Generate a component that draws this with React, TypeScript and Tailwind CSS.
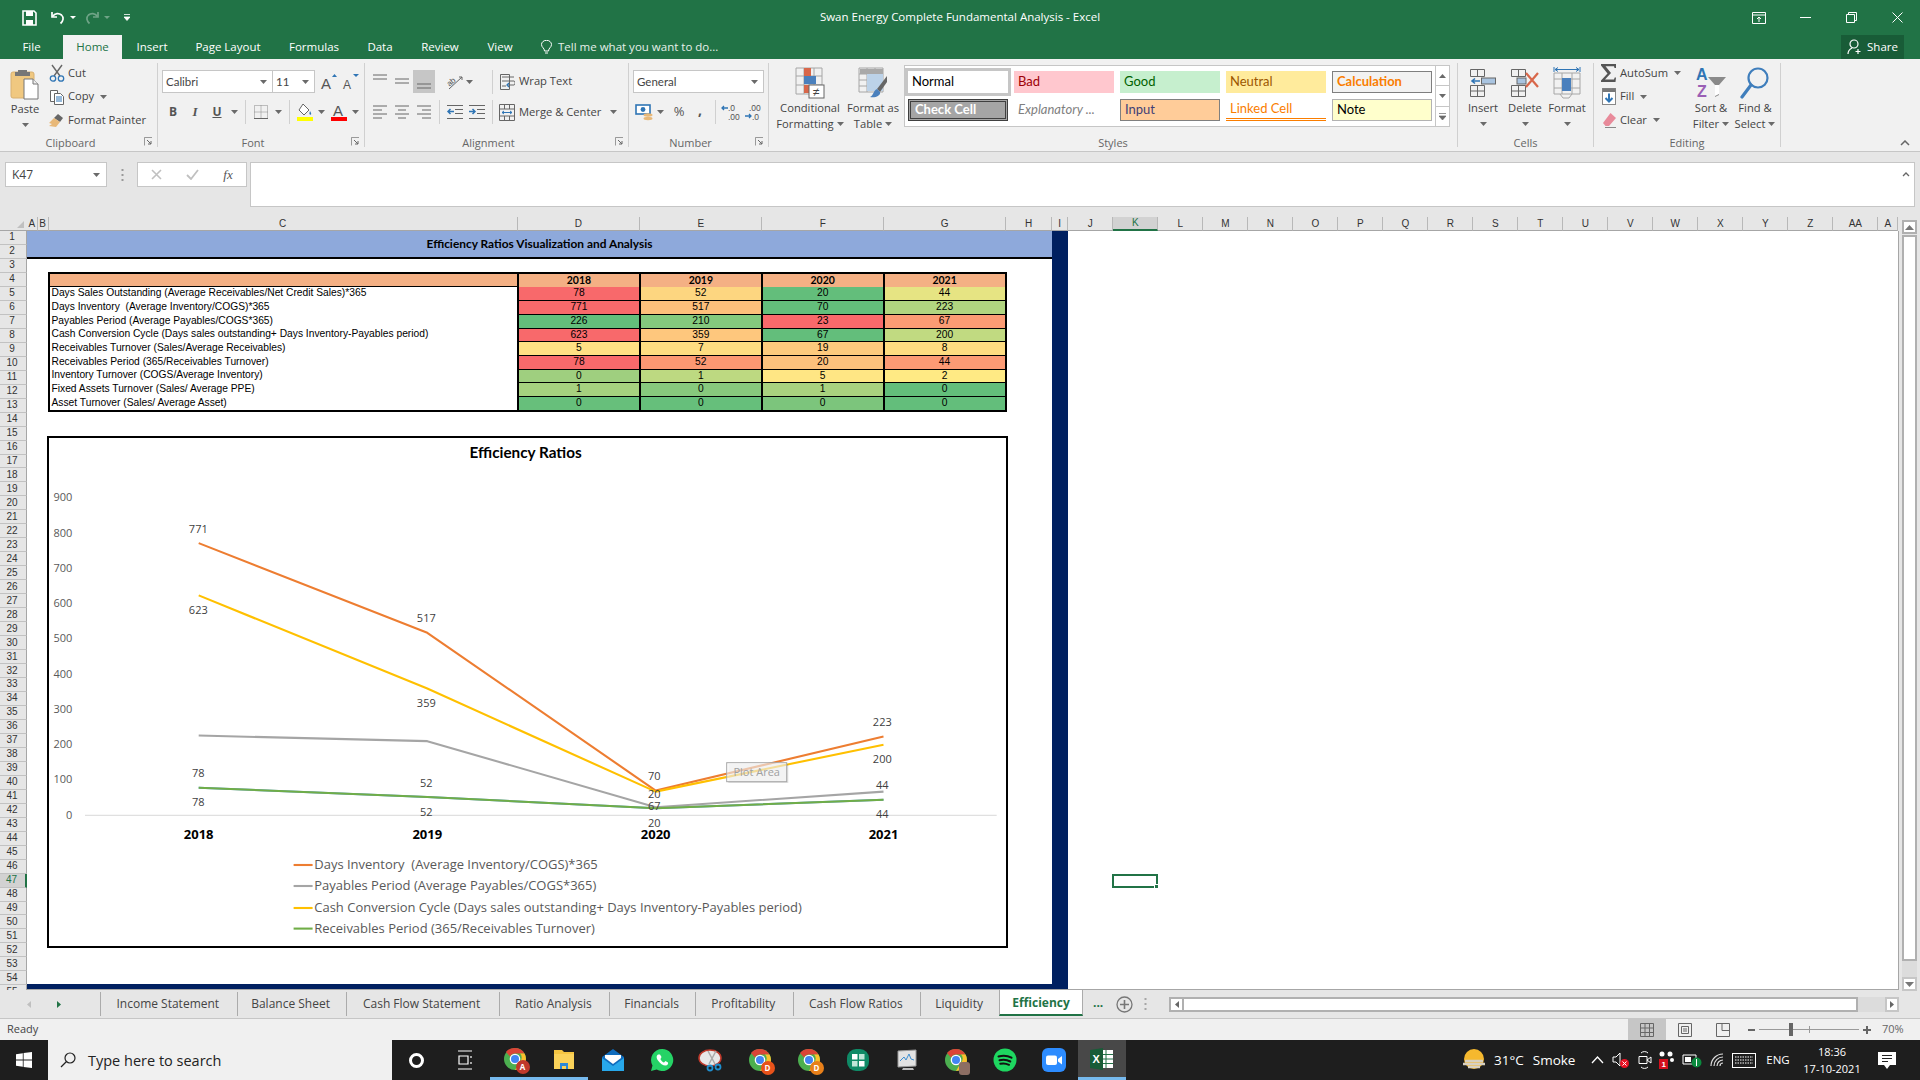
import React from "react";

const uiFont = "font-['Open_Sans',sans-serif]";
const calibri = "font-['Lato','Noto_Sans',sans-serif]";

// ---------- small helpers ----------
const Caret = ({ className = "" }: { className?: string }) => (
  <svg width="7" height="4" viewBox="0 0 7 4" className={className}>
    <path d="M0 0h7L3.5 4z" fill="#6a6a6a" />
  </svg>
);

const Slot = ({ w, children, className = "" }: { w: string; children?: React.ReactNode; className?: string }) => (
  <div className={`flex h-full shrink-0 items-center justify-center ${w} ${className}`}>{children}</div>
);

const Launcher = () => (
  <svg width="9" height="9" viewBox="0 0 9 9" className="absolute bottom-[1px] right-[4px]">
    <path d="M.5 4V.5H8M.5.5v8" fill="none" stroke="#9a9a9a" />
    <path d="M3 3l4 4M7 4v3H4" fill="none" stroke="#666" />
  </svg>
);

const Group = ({ w, label, launcher, children }: { w: string; label: string; launcher?: boolean; children: React.ReactNode }) => (
  <div className={`relative mt-1 flex h-[84px] shrink-0 flex-col border-r border-[#d0d0d0] ${w}`}>
    <div className="h-[72px]">{children}</div>
    <div className={`h-[12px] text-center text-[11px] leading-[16px] text-[#666] ${launcher ? "pr-[16px]" : ""}`}>{label}</div>
    {launcher && <Launcher />}
  </div>
);

const BigButton = ({ w, icon, lines, caretInline }: { w: string; icon: React.ReactNode; lines: string[]; caretInline?: boolean }) => (
  <div className={`flex shrink-0 flex-col items-center pt-[3px] ${w}`}>
    <div className="flex h-[34px] items-center justify-center">{icon}</div>
    {lines.map((l, i) => (
      <div key={l} className="flex h-[16px] items-center gap-[3px] whitespace-nowrap text-[11.2px] leading-[16px] text-[#444]">
        {l}
        {caretInline && i === lines.length - 1 && <Caret />}
      </div>
    ))}
    {!caretInline && (
      <div className="flex h-[16px] items-center">
        <Caret />
      </div>
    )}
  </div>
);

const Sep = ({ ml }: { ml: string }) => <div className={`h-[24px] w-px shrink-0 bg-[#d0d0d0] ${ml}`} />;

const Lines = ({ kind }: { kind: string }) => {
  const rows: Record<string, string> = {
    top: "M2 2h14M2 6h14",
    mid: "M2 6h14M2 10h14",
    bot: "M2 11h14M2 15h14",
    left: "M2 3h14M2 7h9M2 11h14M2 15h9",
    center: "M2 3h14M5 7h8M2 11h14M5 15h8",
    right: "M2 3h14M7 7h9M2 11h14M7 15h9",
  };
  return (
    <svg width="18" height="18" viewBox="0 0 18 18">
      <path d={rows[kind]} stroke="#666" fill="none" />
    </svg>
  );
};

// ---------- ribbon icons ----------
const PasteIcon = () => (
  <svg width="30" height="32" viewBox="0 0 30 32">
    <rect x="1" y="4" width="23" height="26" rx="2" fill="#f0c880" stroke="#d8b070" />
    <path d="M8 2h9v2h3v4H5V4h3z" fill="#777" />
    <path d="M14 11h9l5 5v15H14z" fill="#fff" stroke="#777" />
    <path d="M23 11v5h5" fill="#eee" stroke="#777" />
  </svg>
);
const CutIcon = () => (
  <svg width="16" height="18" viewBox="0 0 16 18" fill="none">
    <path d="M3 1l8 11M13 1L5 12" stroke="#666" strokeWidth="1.4" />
    <circle cx="4" cy="14.5" r="2.7" stroke="#2f75b5" strokeWidth="1.3" />
    <circle cx="12" cy="14.5" r="2.7" stroke="#2f75b5" strokeWidth="1.3" />
  </svg>
);
const CopyIcon = () => (
  <svg width="16" height="16" viewBox="0 0 16 16" fill="#fff">
    <path d="M1.5 1.5h7v11h-7z" stroke="#666" />
    <path d="M5.5 4.5h6l3 3v8h-9z" stroke="#666" />
    <path d="M7 8h6M7 10h6M7 12h6" stroke="#2f75b5" />
  </svg>
);
const PainterIcon = () => (
  <svg width="18" height="17" viewBox="0 0 18 17">
    <path d="M10 2l5 4-3 4-6-4z" fill="#666" />
    <path d="M6 6l6 4-4 5-7-1 3-2-3-1z" fill="#e8b878" />
  </svg>
);
const FontGrow = ({ up }: { up: boolean }) => (
  <svg width="18" height="18" viewBox="0 0 18 18">
    <text x="1" y="16" fontSize={up ? 15 : 12} fontFamily="Liberation Sans" fill="#555">A</text>
    <path d={up ? "M12 4l2.5-3L17 4z" : "M11 1h6l-3 3z"} fill="#2f75b5" />
  </svg>
);
const BordersIcon = () => (
  <svg width="16" height="16" viewBox="0 0 16 16" fill="none">
    <path d="M1.5 1.5h13v13h-13zM8 1.5v13M1.5 8h13" stroke="#888" strokeDasharray="1 1" />
    <path d="M1 14.5h14" stroke="#666" />
  </svg>
);
const FillIcon = () => (
  <svg width="18" height="20" viewBox="0 0 18 20" fill="none">
    <path d="M7 2l6 6-5 5-5-5z" fill="#fff" stroke="#666" />
    <path d="M14 9c1.4 2 1.6 3.6.4 3.8-1.3 0-1.2-1.8-.4-3.8z" fill="#2f75b5" />
    <rect x="1" y="15" width="16" height="4" fill="#ffff00" />
  </svg>
);
const FontColorIcon = () => (
  <svg width="18" height="20" viewBox="0 0 18 20">
    <text x="3" y="13.5" fontSize="15" fontFamily="Liberation Sans" fill="#555">A</text>
    <rect x="1" y="15" width="16" height="4" fill="#ff0000" />
  </svg>
);
const OrientIcon = () => (
  <svg width="18" height="18" viewBox="0 0 18 18" fill="none">
    <text x="1" y="11" fontSize="8" fontFamily="Liberation Sans" fill="#555" transform="rotate(-40 6 9)">ab</text>
    <path d="M3 16L16 4M13 4h3v3" stroke="#666" />
  </svg>
);
const WrapIcon = () => (
  <svg width="16" height="18" viewBox="0 0 16 18" fill="none">
    <path d="M1.5 1.5h9v15h-9M1.5 1.5v15" stroke="#666" />
    <path d="M3 4h12M3 8h12c1.5 0 1.5 4 0 4H9M3 13h4" stroke="#666" />
    <path d="M10 10l-2 2 2 2" stroke="#2f75b5" strokeWidth="1.3" />
  </svg>
);
const MergeIcon = () => (
  <svg width="16" height="17" viewBox="0 0 16 17" fill="none">
    <path d="M.5.5h15v16H.5zM.5 5h15M.5 12h15M5.5.5V5M10.5.5V5M5.5 12v4.5M10.5 12v4.5" stroke="#666" />
    <path d="M3 8.5h10M5 7l-2 1.5L5 10M11 7l2 1.5-2 1.5" stroke="#2f75b5" />
  </svg>
);
const IndentIcon = ({ dir }: { dir: "in" | "out" }) => (
  <svg width="18" height="16" viewBox="0 0 18 16" fill="none">
    <path d="M1 1.5h16M9 5.5h8M9 9.5h8M1 14.5h16" stroke="#666" />
    {dir === "out" ? (
      <path d="M8 7.5H2M4.5 5L2 7.5 4.5 10" stroke="#2f75b5" strokeWidth="1.5" />
    ) : (
      <path d="M1 7.5h6M4.5 5L7 7.5 4.5 10" stroke="#2f75b5" strokeWidth="1.5" />
    )}
  </svg>
);
const AccountingIcon = () => (
  <svg width="19" height="17" viewBox="0 0 19 17">
    <rect x="1" y="1" width="14" height="9" fill="#fff" stroke="#2f75b5" strokeWidth="1.6" />
    <circle cx="8" cy="5.5" r="2.4" fill="#2f75b5" />
    <ellipse cx="13" cy="11" rx="4.5" ry="1.7" fill="#e8b878" />
    <ellipse cx="13" cy="14.5" rx="4.5" ry="1.7" fill="#e8b878" />
  </svg>
);
const DecimalIcon = ({ inc }: { inc: boolean }) => (
  <svg width="20" height="18" viewBox="0 0 20 18">
    <text x={inc ? 7 : 5} y="8" fontSize="8.5" fontFamily="Liberation Sans" fill="#555">{inc ? ".0" : ".00"}</text>
    <text x={inc ? 7 : 8} y="17" fontSize="8.5" fontFamily="Liberation Sans" fill="#555">{inc ? ".00" : ".0"}</text>
    <path d={inc ? "M1 5h6M3 3L1 5l2 2" : "M1 13h6M5 11l2 2-2 2"} fill="none" stroke="#2f75b5" strokeWidth="1.3" />
  </svg>
);
const CondFmtIcon = () => (
  <svg width="30" height="32" viewBox="0 0 30 32" fill="none">
    <path d="M1 1h26v26H1zM9 1v26M19 1v26M1 9h26M1 18h26" stroke="#a6a6a6" />
    <rect x="9" y="1" width="7" height="8" fill="#d8674a" />
    <rect x="9" y="9" width="12" height="8" fill="#4a80bd" />
    <rect x="9" y="18" width="9" height="8" fill="#d8674a" />
    <rect x="14" y="18" width="15" height="13" fill="#fff" stroke="#666" />
    <text x="18" y="29" fontSize="12" fontFamily="Liberation Sans" fill="#444">≠</text>
  </svg>
);
const FmtTableIcon = () => (
  <svg width="30" height="32" viewBox="0 0 30 32" fill="none">
    <path d="M1 1h24v24H1zM1 7h24M1 13h24M1 19h24M9 1v24M17 1v24" stroke="#a6a6a6" />
    <rect x="2" y="2" width="23" height="5" fill="#a9a9a9" />
    <rect x="9" y="7" width="16" height="17" fill="#bcd2e8" />
    <path d="M29 9L19 22l3 3 7-10z" fill="#666" />
    <path d="M19 22c-4 2-3 6-7 8 5 1 11-1 10-5z" fill="#4a80bd" />
  </svg>
);
const InsertIcon = () => (
  <svg width="28" height="32" viewBox="0 0 28 32" fill="none">
    <path d="M1.5 2.5h14v7h-14zM8.5 2.5v7M1.5 18.5h14v11h-14zM8.5 18.5v11M1.5 24h14" stroke="#666" />
    <rect x="12.5" y="11" width="14" height="6" fill="#a9c4e0" stroke="#666" />
    <path d="M11 14H3M6 11.5L3 14l3 2.5" stroke="#2f75b5" strokeWidth="1.6" />
  </svg>
);
const DeleteIcon = () => (
  <svg width="30" height="32" viewBox="0 0 30 32" fill="none">
    <path d="M1.5 2.5h14v7h-14zM8.5 2.5v7M1.5 18.5h14v11h-14zM8.5 18.5v11M1.5 24h14" stroke="#666" />
    <rect x="7" y="11" width="9" height="6" fill="#a9c4e0" stroke="#666" />
    <path d="M16 6l12 14M28 6L16 20" stroke="#d8674a" strokeWidth="2.2" />
  </svg>
);
const FormatCellsIcon = () => (
  <svg width="30" height="34" viewBox="0 0 30 34" fill="none">
    <path d="M2 1v5M28 1v5M3 3.5h24M3 3.5l3-2M3 3.5l3 2M27 3.5l-3-2M27 3.5l-3 2" stroke="#2f75b5" />
    <path d="M2 7h26v21H2zM10 7v21M20 7v21M2 13h26M2 22h26" stroke="#a6a6a6" />
    <rect x="10" y="12" width="9" height="13" fill="#4a80bd" />
    <path d="M8 28l3 4h6l3-4" stroke="#a6a6a6" />
  </svg>
);
const SigmaIcon = () => (
  <svg width="16" height="18" viewBox="0 0 16 18">
    <path d="M0 0h15v4h-1.5l-.5-1.7H4.5L10 9l-6 6.5h9l.7-2H15L14.5 18H0v-1.4L6.5 9.5 0 1.4z" fill="#555" />
  </svg>
);
const FillDownIcon = () => (
  <svg width="14" height="17" viewBox="0 0 14 17" fill="none">
    <rect x=".5" y=".5" width="13" height="16" fill="#fff" stroke="#888" />
    <rect x=".5" y=".5" width="13" height="3.5" fill="#777" />
    <path d="M7 5.5v8M3.5 10L7 13.5 10.5 10" stroke="#2f75b5" strokeWidth="2" />
  </svg>
);
const EraserIcon = () => (
  <svg width="15" height="16" viewBox="0 0 15 16">
    <path d="M8.5 1L14 6l-7 8H3.5L1 11z" fill="#e88a9a" />
    <path d="M3 15.5h11" stroke="#888" />
  </svg>
);
const SortIcon = () => (
  <svg width="32" height="34" viewBox="0 0 32 34">
    <text x="1" y="14" fontSize="16" fontWeight="700" fontFamily="Liberation Sans" fill="#2f75b5">A</text>
    <text x="2" y="31" fontSize="16" fontWeight="700" fontFamily="Liberation Sans" fill="#9a5fb5">Z</text>
    <path d="M13 11h18l-7 8v10l-4 2V19z" fill="#8a8a8a" />
    <path d="M20 19h4v9l-4 2z" fill="#fff" />
  </svg>
);
const FindIcon = () => (
  <svg width="30" height="34" viewBox="0 0 30 34" fill="none">
    <circle cx="18" cy="12" r="9.5" stroke="#3f7ebc" strokeWidth="2.2" />
    <path d="M11 19L2 31" stroke="#3f7ebc" strokeWidth="3.2" strokeLinecap="round" />
  </svg>
);

// ---------- title bar ----------
const TitleBar = () => (
  <div className="relative flex h-[35px] items-center text-white">
    <Slot w="w-[28px]" className="ml-[15px]">
      <svg width="15" height="16" viewBox="0 0 15 16" fill="none">
        <path d="M1 1h11l2 2v12H1z" stroke="#fff" strokeWidth="1.6" />
        <rect x="4" y="1" width="7" height="5" fill="#fff" />
        <rect x="4" y="10" width="7" height="5" fill="#fff" />
      </svg>
    </Slot>
    <Slot w="w-[24px]" className="ml-[3px]">
      <svg width="16" height="16" viewBox="0 0 16 16" fill="none">
        <path d="M2 2v5h5" stroke="#fff" strokeWidth="1.7" />
        <path d="M2.5 6.5C5 3 9 3 11.5 5c2.5 2.4 2 6-1 8.5" stroke="#fff" strokeWidth="1.7" />
      </svg>
    </Slot>
    <svg width="6" height="3" viewBox="0 0 6 3"><path d="M0 0h6L3 3z" fill="#fff" /></svg>
    <Slot w="w-[24px]" className="ml-[4px]">
      <svg width="16" height="16" viewBox="0 0 16 16" fill="none" opacity=".35">
        <path d="M14 2v5H9" stroke="#fff" strokeWidth="1.7" />
        <path d="M13.5 6.5C11 3 7 3 4.5 5c-2.5 2.4-2 6 1 8.5" stroke="#fff" strokeWidth="1.7" />
      </svg>
    </Slot>
    <svg width="6" height="3" viewBox="0 0 6 3" opacity=".35"><path d="M0 0h6L3 3z" fill="#fff" /></svg>
    <svg width="6" height="7" viewBox="0 0 6 7" className="ml-[14px]">
      <path d="M0 .5h6M0 3h6L3 6.5z" stroke="#fff" strokeWidth=".8" fill="#fff" />
    </svg>
    <div className="absolute left-0 right-0 top-[9px] text-center text-[11.5px] leading-[16px] text-[#fff]">
      Swan Energy Complete Fundamental Analysis - Excel
    </div>
    <div className="ml-auto flex h-full">
      <Slot w="w-[46px]">
        <svg width="14" height="12" viewBox="0 0 14 12" fill="none" stroke="#fff">
          <path d="M.5.5h13v11H.5zM.5 3h13M7 10V5M5 7l2-2 2 2" />
        </svg>
      </Slot>
      <Slot w="w-[46px]">
        <svg width="11" height="1" viewBox="0 0 11 1"><path d="M0 .5h11" stroke="#fff" /></svg>
      </Slot>
      <Slot w="w-[46px]">
        <svg width="11" height="11" viewBox="0 0 11 11" fill="none" stroke="#fff">
          <path d="M.5 2.5h8v8h-8zM2.5 2.5v-2h8v8h-2" />
        </svg>
      </Slot>
      <Slot w="w-[46px]">
        <svg width="11" height="11" viewBox="0 0 11 11" fill="none" stroke="#fff">
          <path d="M.5.5l10 10M10.500.5l-10 10" />
        </svg>
      </Slot>
    </div>
  </div>
);

const MenuTabs = () => {
  const tabs: [string, string][] = [
    ["Insert", "w-[60px]"],
    ["Page Layout", "w-[92px]"],
    ["Formulas", "w-[80px]"],
    ["Data", "w-[52px]"],
    ["Review", "w-[68px]"],
    ["View", "w-[52px]"],
  ];
  return (
    <div className="flex h-[24px] text-[11.5px] text-white">
      <Slot w="w-[63px]" className="pb-[1px] pt-[1px]">
        File
      </Slot>
      <Slot w="w-[59px]" className="bg-[#f1f1f1] text-[#217346]">
        Home
      </Slot>
      {tabs.map(([t, w]) => (
        <Slot key={t} w={w}>
          {t}
        </Slot>
      ))}
      <div className="ml-[15px] flex items-center gap-[6px] text-[#e6f0ea]">
        <svg width="11" height="15" viewBox="0 0 11 15" fill="none" stroke="#fff">
          <path d="M3.500 11c0-3-3-3.500-3-6.500a5 4.200 0 0 1 10 0c0 3-3 3.500-3 6.500zM4 13h3" />
        </svg>
        Tell me what you want to do...
      </div>
      <div className="ml-auto mr-[16px] flex w-[63px] items-center justify-center gap-[4px] bg-[#185c37]">
        <svg width="16" height="16" viewBox="0 0 16 16" fill="none" stroke="#fff" strokeWidth="1.2">
          <circle cx="7" cy="5" r="4" />
          <path d="M1 15c0-3.500 2-5 4-6M11 10v5M8.500 12.500h5" />
        </svg>
        Share
      </div>
    </div>
  );
};

// ---------- ribbon ----------
const SmallAction = ({ icon, label, caret }: { icon: React.ReactNode; label: string; caret?: boolean }) => (
  <div className="flex h-[20px] items-center whitespace-nowrap text-[11.2px] text-[#444]">
    <div className="flex w-[18px] justify-center">{icon}</div>
    <span className="ml-[2px]">{label}</span>
    {caret && <Caret className="ml-[6px]" />}
  </div>
);

const Box = ({ w, text, className = "" }: { w: string; text: string; className?: string }) => (
  <div className={`flex h-[23px] shrink-0 items-center justify-between border border-[#c6c6c6] bg-white pl-[3px] pr-[5px] text-[11.5px] text-[#444] ${w} ${className}`}>
    {text}
    <Caret />
  </div>
);

const StyleCell = ({ text, className }: { text: string; className: string }) => (
  <div className={`flex h-[22px] w-[100px] items-center overflow-hidden whitespace-nowrap px-[4px] text-[13px] ${calibri} ${className}`}>{text}</div>
);

const Ribbon = () => (
  <div className={`relative flex h-[93px] border-b border-[#c6c6c6] bg-[#f1f1f1] ${uiFont}`}>
    <Group w="w-[158px]" label="Clipboard" launcher>
      <div className="flex">
        <div className="flex w-[50px] flex-col items-center pt-[4px]">
          <div className="flex h-[33px] items-center"><PasteIcon /></div>
          <div className="mt-[1px] h-[16px] text-[11.2px] leading-[16px] text-[#444]">Paste</div>
          <div className="flex h-[16px] items-center"><Caret /></div>
        </div>
        <div className="ml-[-2px] flex flex-col gap-[3.5px]">
          <SmallAction icon={<CutIcon />} label="Cut" />
          <SmallAction icon={<CopyIcon />} label="Copy" caret />
          <SmallAction icon={<PainterIcon />} label="Format Painter" />
        </div>
      </div>
    </Group>

    <Group w="w-[207px]" label="Font" launcher>
      <div className="flex flex-col gap-[7px] pl-[4px] pt-[7px]">
        <div className="flex items-center">
          <Box w="w-[111px]" text="Calibri" className={calibri} />
          <Box w="w-[43px]" text="11" className={`ml-[-1px] ${calibri}`} />
          <Slot w="w-[22px]" className="ml-[3px]"><FontGrow up /></Slot>
          <Slot w="w-[22px]"><FontGrow up={false} /></Slot>
        </div>
        <div className="flex h-[24px] items-center">
          <Slot w="w-[22px]" className="text-[12px] font-bold text-[#555]">B</Slot>
          <Slot w="w-[22px]" className="font-['Liberation_Serif',serif] text-[13px] font-bold italic text-[#555]">I</Slot>
          <Slot w="w-[22px]" className="text-[12px] font-bold text-[#555] underline">U</Slot>
          <Slot w="w-[12px]"><Caret /></Slot>
          <Sep ml="ml-[5px]" />
          <Slot w="w-[22px]" className="ml-[4px]"><BordersIcon /></Slot>
          <Slot w="w-[12px]"><Caret /></Slot>
          <Sep ml="ml-[5px]" />
          <Slot w="w-[22px]" className="ml-[4px]"><FillIcon /></Slot>
          <Slot w="w-[10px]"><Caret /></Slot>
          <Slot w="w-[22px]" className="ml-[2px]"><FontColorIcon /></Slot>
          <Slot w="w-[11px]"><Caret /></Slot>
        </div>
      </div>
    </Group>

    <Group w="w-[264px]" label="Alignment" launcher>
      <div className="flex flex-col gap-[7px] pl-[4px] pt-[7px]">
        <div className="flex h-[23px] items-center">
          <Slot w="w-[22px]"><Lines kind="top" /></Slot>
          <Slot w="w-[22px]"><Lines kind="mid" /></Slot>
          <Slot w="w-[22px]" className="bg-[#c6c6c6]"><Lines kind="bot" /></Slot>
          <Slot w="w-[20px]" className="ml-[10px]"><OrientIcon /></Slot>
          <Slot w="w-[8px]"><Caret /></Slot>
          <Sep ml="ml-[19px]" />
          <Slot w="w-[16px]" className="ml-[6px]"><WrapIcon /></Slot>
          <span className="ml-[4px] whitespace-nowrap text-[11.2px] text-[#444]">Wrap Text</span>
        </div>
        <div className="flex h-[24px] items-center">
          <Slot w="w-[22px]"><Lines kind="left" /></Slot>
          <Slot w="w-[22px]"><Lines kind="center" /></Slot>
          <Slot w="w-[22px]"><Lines kind="right" /></Slot>
          <Sep ml="ml-[4px]" />
          <Slot w="w-[22px]" className="ml-[4px]"><IndentIcon dir="out" /></Slot>
          <Slot w="w-[22px]"><IndentIcon dir="in" /></Slot>
          <Sep ml="ml-[4px]" />
          <Slot w="w-[16px]" className="ml-[6px]"><MergeIcon /></Slot>
          <span className="ml-[4px] whitespace-nowrap text-[11.2px] text-[#444]">Merge &amp; Center</span>
          <Caret className="ml-[9px]" />
        </div>
      </div>
    </Group>

    <Group w="w-[140px]" label="Number" launcher>
      <div className="flex flex-col gap-[7px] pl-[4px] pt-[7px]">
        <Box w="w-[131px]" text="General" className={calibri} />
        <div className="flex h-[24px] items-center">
          <Slot w="w-[22px]"><AccountingIcon /></Slot>
          <Slot w="w-[10px]"><Caret /></Slot>
          <Slot w="w-[20px]" className="ml-[4px] text-[13px] text-[#555]">%</Slot>
          <Slot w="w-[20px]" className="ml-[1px] pb-[6px] text-[14px] font-bold text-[#555]">,</Slot>
          <Sep ml="ml-[5px]" />
          <Slot w="w-[22px]" className="ml-[4px]"><DecimalIcon inc /></Slot>
          <Slot w="w-[22px]" className="ml-[1px]"><DecimalIcon inc={false} /></Slot>
        </div>
      </div>
    </Group>

    <Group w="w-[689px]" label="Styles">
      <div className="flex">
        <BigButton w="w-[64px] ml-[9px]" icon={<CondFmtIcon />} lines={["Conditional", "Formatting"]} caretInline />
        <BigButton w="w-[60px] ml-[1px]" icon={<FmtTableIcon />} lines={["Format as", "Table"]} caretInline />
        <div className="relative ml-[1px] mt-[2px] flex h-[62px] w-[546px] border border-[#c6c6c6] bg-white">
          <div className="grid grid-cols-[repeat(5,100px)] content-start gap-x-[6px] gap-y-[6px] pl-[3px] pt-[5px]">
            <StyleCell text="Normal" className="text-black outline-[3px] outline-[#c6c6c6]" />
            <StyleCell text="Bad" className="bg-[#ffc7ce] text-[#9c0006]" />
            <StyleCell text="Good" className="bg-[#c6efce] text-[#006100]" />
            <StyleCell text="Neutral" className="bg-[#ffeb9c] text-[#9c5700]" />
            <StyleCell text="Calculation" className="border border-[#7f7f7f] bg-[#f2f2f2] font-bold text-[#fa7d00]" />
            <StyleCell text="Check Cell" className="border-[3px] border-double border-[#3f3f3f] bg-[#a5a5a5] font-bold text-white" />
            <StyleCell text="Explanatory ..." className="italic text-[#7f7f7f]" />
            <StyleCell text="Input" className="border border-[#7f7f7f] bg-[#ffcc99] text-[#3f3f76]" />
            <StyleCell text="Linked Cell" className="border-b-[3px] border-double border-[#fa7d00] text-[#fa7d00]" />
            <StyleCell text="Note" className="border border-[#b2b2b2] bg-[#ffffcc] text-black" />
          </div>
          <div className="absolute right-0 top-0 flex h-full w-[14px] flex-col border-l border-[#c6c6c6]">
            <div className="flex flex-1 items-center justify-center border-b border-[#c6c6c6]">
              <svg width="7" height="4" viewBox="0 0 7 4"><path d="M0 4h7L3.500 0z" fill="#6a6a6a" /></svg>
            </div>
            <div className="flex flex-1 items-center justify-center border-b border-[#c6c6c6]"><Caret /></div>
            <div className="flex flex-1 items-center justify-center">
              <svg width="7" height="7" viewBox="0 0 7 7"><path d="M0 .5h7M0 3h7L3.500 7z" stroke="#6a6a6a" strokeWidth=".7" fill="#6a6a6a" /></svg>
            </div>
          </div>
        </div>
      </div>
    </Group>

    <Group w="w-[136px]" label="Cells">
      <div className="flex pl-[4px]">
        <BigButton w="w-[42px]" icon={<InsertIcon />} lines={["Insert"]} />
        <BigButton w="w-[42px]" icon={<DeleteIcon />} lines={["Delete"]} />
        <BigButton w="w-[42px]" icon={<FormatCellsIcon />} lines={["Format"]} />
      </div>
    </Group>

    <Group w="w-[187px]" label="Editing">
      <div className="flex">
        <div className="flex w-[95px] flex-col gap-[3.5px] pl-[6px]">
          <SmallAction icon={<SigmaIcon />} label="AutoSum" caret />
          <SmallAction icon={<FillDownIcon />} label="Fill" caret />
          <SmallAction icon={<EraserIcon />} label="Clear" caret />
        </div>
        <BigButton w="w-[44px]" icon={<SortIcon />} lines={["Sort &", "Filter"]} caretInline />
        <BigButton w="w-[44px]" icon={<FindIcon />} lines={["Find &", "Select"]} caretInline />
      </div>
    </Group>

    <svg width="10" height="6" viewBox="0 0 10 6" className="absolute bottom-[5px] right-[10px]" fill="none">
      <path d="M1 5l4-4 4 4" stroke="#666" strokeWidth="1.5" />
    </svg>
  </div>
);

// ---------- formula bar ----------
const FormulaBar = () => (
  <div className={`flex h-[65px] items-start bg-[#e6e6e6] pl-[5px] pt-[10px] ${uiFont}`}>
    <div className="flex h-[25px] w-[102px] items-center justify-between border border-[#c6c6c6] bg-white pl-[6px] pr-[6px] text-[12px] text-[#444]">
      K47
      <Caret />
    </div>
    <div className="flex h-[25px] w-[30px] items-center justify-center text-[#999]">
      <svg width="3" height="12" viewBox="0 0 3 12"><path d="M1.500 0v2M1.500 5v2M1.500 10v2" stroke="#999" strokeWidth="2" /></svg>
    </div>
    <div className="flex h-[25px] w-[110px] items-center border border-[#c6c6c6] bg-white">
      <Slot w="w-[36px]">
        <svg width="11" height="11" viewBox="0 0 11 11"><path d="M1 1l9 9M10 1l-9 9" stroke="#c0c0c0" strokeWidth="1.600" /></svg>
      </Slot>
      <Slot w="w-[36px]">
        <svg width="13" height="11" viewBox="0 0 13 11" fill="none"><path d="M1 6l4 4 7-9" stroke="#c0c0c0" strokeWidth="1.800" /></svg>
      </Slot>
      <Slot w="w-[36px]" className="font-['Liberation_Serif',serif] text-[13px] italic text-[#555]">
        fx
      </Slot>
    </div>
    <div className="relative ml-[3px] mr-[5px] h-[45px] flex-1 border border-[#c6c6c6] bg-white">
      <svg width="8" height="5" viewBox="0 0 8 5" fill="none" className="absolute right-[4px] top-[9px]">
        <path d="M1 4l3-3 3 3" stroke="#666" strokeWidth="1.300" />
      </svg>
    </div>
  </div>
);

// ---------- grid headers ----------
const colHeaders: [string, string][] = [
  ["A", "w-[10.5px]"], ["B", "w-[11px]"], ["C", "w-[469px]"], ["D", "w-[122.7px]"], ["E", "w-[122.1px]"],
  ["F", "w-[122.1px]"], ["G", "w-[121.7px]"], ["H", "w-[45.9px]"], ["I", "w-[16.4px]"], ["J", "w-[45px]"],
  ["K", "w-[45px]"], ["L", "w-[45px]"], ["M", "w-[45px]"], ["N", "w-[45px]"], ["O", "w-[45px]"], ["P", "w-[45px]"],
  ["Q", "w-[45px]"], ["R", "w-[45px]"], ["S", "w-[45px]"], ["T", "w-[45px]"], ["U", "w-[45px]"], ["V", "w-[45px]"],
  ["W", "w-[45px]"], ["X", "w-[45px]"], ["Y", "w-[45px]"], ["Z", "w-[45px]"], ["AA", "w-[45px]"], ["A", "w-[20px]"],
];

const ColumnHeader = () => (
  <div className="flex h-[14px] bg-[#e6e6e6] font-['Liberation_Sans',sans-serif] text-[10px] leading-[12px] text-[#333]">
    <div className="relative h-full w-[27px] shrink-0 border-b border-[#a6a6a6]">
      <svg width="7" height="7" viewBox="0 0 7 7" className="absolute bottom-[2px] right-[3px]"><path d="M7 0v7H0z" fill="#c0c0c0" /></svg>
    </div>
    {colHeaders.map(([c, w], i) => (
      <div
        key={c + i}
        className={`flex shrink-0 items-center justify-center overflow-hidden border-r border-[#b8b8b8] ${w} ${
          c === "K" ? "border-b-2 border-b-[#217346] bg-[#d2d2d2] text-[#217346]" : "border-b border-b-[#a6a6a6]"
        }`}
      >
        {c}
      </div>
    ))}
  </div>
);

const rowNumbers = Array.from({ length: 55 }, (_, i) => i + 1);

const RowHeader = () => (
  <div className="h-full w-[27px] shrink-0 overflow-hidden bg-[#e6e6e6] font-['Liberation_Sans',sans-serif] text-[10px] text-[#333]">
    {rowNumbers.map((n) => (
      <div
        key={n}
        className={`flex h-[13.97px] items-center justify-center border-b border-[#c2c2c2] pr-[2px] leading-[12px] ${
          n === 47 ? "border-r-2 border-r-[#217346] bg-[#d2d2d2] text-[#217346]" : "border-r border-r-[#a6a6a6]"
        }`}
      >
        {n}
      </div>
    ))}
  </div>
);

// ---------- table ----------
type Cell = [string, string];
const rows: { label: string; cells: Cell[] }[] = [
  { label: "Days Sales Outstanding (Average Receivables/Net Credit Sales)*365", cells: [["78", "bg-[#f8696b]"], ["52", "bg-[#fdd680]"], ["20", "bg-[#63be7b]"], ["44", "bg-[#e6e483]"]] },
  { label: "Days Inventory  (Average Inventory/COGS)*365", cells: [["771", "bg-[#f8696b]"], ["517", "bg-[#fdbf7b]"], ["70", "bg-[#63be7b]"], ["223", "bg-[#b1d580]"]] },
  { label: "Payables Period (Average Payables/COGS*365)", cells: [["226", "bg-[#63be7b]"], ["210", "bg-[#84c97d]"], ["23", "bg-[#f8696b]"], ["67", "bg-[#fb9b74]"]] },
  { label: "Cash Conversion Cycle (Days sales outstanding+ Days Inventory-Payables period)", cells: [["623", "bg-[#f8696b]"], ["359", "bg-[#fec77d]"], ["67", "bg-[#63be7b]"], ["200", "bg-[#c1da81]"]] },
  { label: "Receivables Turnover (Sales/Average Receivables)", cells: [["5", "bg-[#ffe084]"], ["7", "bg-[#fedd81]"], ["19", "bg-[#fdca7d]"], ["8", "bg-[#fedc81]"]] },
  { label: "Receivables Period (365/Receivables Turnover)", cells: [["78", "bg-[#f8696b]"], ["52", "bg-[#fc9872]"], ["20", "bg-[#fdc17c]"], ["44", "bg-[#fc9a74]"]] },
  { label: "Inventory Turnover (COGS/Average Inventory)", cells: [["0", "bg-[#9fcf7f]"], ["1", "bg-[#bdd981]"], ["5", "bg-[#ffe684]"], ["2", "bg-[#ffea84]"]] },
  { label: "Fixed Assets Turnover (Sales/ Average PPE)", cells: [["1", "bg-[#a6d17f]"], ["0", "bg-[#87c97d]"], ["1", "bg-[#a9d27f]"], ["0", "bg-[#63be7b]"]] },
  { label: "Asset Turnover (Sales/ Average Asset)", cells: [["0", "bg-[#67bf7b]"], ["0", "bg-[#66bf7b]"], ["0", "bg-[#7cc57c]"], ["0", "bg-[#63be7b]"]] },
];

const RatioTable = () => (
  <div className="ml-[20.5px] grid h-[140px] w-[959px] grid-cols-[467.5px_repeat(4,1fr)] grid-rows-[13px_repeat(9,1fr)] border-2 border-black font-['Liberation_Sans',sans-serif] text-[10.25px] leading-[12px] text-black">
    <div className="border-b border-black bg-[#f4b084]" />
    {["2018", "2019", "2020", "2021"].map((y) => (
      <div key={y} className={`flex items-center justify-center border-l-2 border-black bg-[#f4b084] text-[10.5px] font-bold ${calibri}`}>
        {y}
      </div>
    ))}
    {rows.map((r, ri) => (
      <React.Fragment key={r.label}>
        <div className="flex items-center overflow-hidden whitespace-pre pl-[2px]">{r.label}</div>
        {r.cells.map(([v, bg], ci) => (
          <div key={ci} className={`flex items-center justify-center border-l-2 border-black ${ri > 0 ? "border-t border-t-black" : ""} ${bg}`}>
            {v}
          </div>
        ))}
      </React.Fragment>
    ))}
  </div>
);

// ---------- chart ----------
const xs = [198.4, 427, 655.4, 883.2];
const py = (v: number) => 815.3 - v * 0.353;
const series: { color: string; values: number[] }[] = [
  { color: "#5b9bd5", values: [78, 52, 20, 44] },
  { color: "#ed7d31", values: [771, 517, 70, 223] },
  { color: "#a5a5a5", values: [226, 210, 23, 67] },
  { color: "#ffc000", values: [623, 359, 67, 200] },
  { color: "#70ad47", values: [78, 52, 20, 44] },
];
const yTicks: [string, number][] = [
  ["900", 496.8], ["800", 533], ["700", 568], ["600", 603], ["500", 638], ["400", 673.8], ["300", 709], ["200", 743.7], ["100", 778.8], ["0", 814.6],
];
const dataLabels: [string, number, number][] = [
  ["771", 198, 529], ["623", 198, 610], ["517", 426, 618], ["359", 426, 703],
  ["78", 198, 773], ["78", 198, 802], ["52", 426, 783], ["52", 426, 812],
  ["70", 654, 776], ["20", 654, 794], ["67", 654, 806], ["20", 654, 823],
  ["223", 882, 722], ["200", 882, 759], ["44", 882, 785], ["44", 882, 814],
];
const legend: [string, string, number][] = [
  ["#ed7d31", "Days Inventory  (Average Inventory/COGS)*365", 865],
  ["#a5a5a5", "Payables Period (Average Payables/COGS*365)", 886],
  ["#ffc000", "Cash Conversion Cycle (Days sales outstanding+ Days Inventory-Payables period)", 908],
  ["#70ad47", "Receivables Period (365/Receivables Turnover)", 928.6],
];

const Chart = () => (
  <div className="ml-[19.7px] mt-[24.7px] h-[512px] w-[961.6px] border-2 border-black bg-white">
    <svg width="957.6" height="508" viewBox="48.7 438 957.6 508" className="block" fontFamily="Open Sans, sans-serif">
      <text x="525.3" y="458" textAnchor="middle" fontSize="15.3" fontWeight="700" fill="#000" fontFamily="Lato, sans-serif">
        Efficiency Ratios
      </text>
      {yTicks.map(([t, y]) => (
        <text key={t} x="72" y={y + 4} textAnchor="end" fontSize="11" fill="#595959">{t}</text>
      ))}
      <line x1="84.7" x2="996.4" y1="815.3" y2="815.3" stroke="#d9d9d9" />
      {series.map((s) => (
        <polyline
          key={s.color}
          points={s.values.map((v, i) => `${xs[i]},${py(v)}`).join(" ")}
          fill="none"
          stroke={s.color}
          strokeWidth="2.1"
          strokeLinejoin="round"
        />
      ))}
      {dataLabels.map(([t, x, y], i) => (
        <text key={i} x={x} y={y + 4} textAnchor="middle" fontSize="11" fill="#404040">{t}</text>
      ))}
      {["2018", "2019", "2020", "2021"].map((y, i) => (
        <text key={y} x={xs[i]} y="839" textAnchor="middle" fontSize="13" fontWeight="700" fill="#000">{y}</text>
      ))}
      {legend.map(([c, t, y]) => (
        <g key={t}>
          <line x1="293.3" x2="312.3" y1={y} y2={y} stroke={c} strokeWidth="2.1" />
          <text x="314" y={y + 4.5} fontSize="13" fill="#595959" xmlSpace="preserve">{t}</text>
        </g>
      ))}
      <rect x="728" y="764" width="60" height="19" fill="#000" opacity=".12" />
      <rect x="726.4" y="762.7" width="60" height="19" fill="#fff" fillOpacity=".6" stroke="#a6a6a6" />
      <text x="756.4" y="776" textAnchor="middle" fontSize="11" fill="#a0a0a0">Plot Area</text>
    </svg>
  </div>
);

// ---------- sheet ----------
const Sheet = () => (
  <div className="relative flex h-[759px] bg-[#e6e6e6]">
    <RowHeader />
    <div className="relative flex-1 overflow-hidden border-b border-r border-[#a6a6a6] bg-white">
      <div className="h-[758px] w-[1041px] border-b-[5px] border-r-[16.5px] border-[#002060] bg-white">
        <div className="flex h-[27.5px] items-center justify-center border-b-2 border-black bg-[#8ea9db] pt-[1px] text-[11.9px] font-bold text-black">
          <span className={calibri}>Efficiency Ratios Visualization and Analysis</span>
        </div>
        <div className="h-[13px]" />
        <RatioTable />
        <Chart />
      </div>
      <div className="absolute left-[1085px] top-[642.6px] h-[14.600px] w-[46px] border-2 border-[#217346]">
        <div className="absolute bottom-[-3px] right-[-3px] h-[5px] w-[5px] border border-white bg-[#217346]" />
      </div>
    </div>
    <div className="w-[21px] shrink-0" />
    <div className="absolute right-[2.7px] top-[-11px] flex w-[15px] flex-col">
      <div className="flex h-[14px] items-center justify-center border-2 border-[#b0b0b0] bg-white">
        <svg width="9" height="5" viewBox="0 0 9 5"><path d="M0 5h9L4.500 0z" fill="#777" /></svg>
      </div>
      <div className="mt-[1px] h-[726px] border-2 border-[#b0b0b0] bg-white" />
      <div className="h-[16px] bg-[#dcdcdc]" />
      <div className="flex h-[14px] items-center justify-center border-2 border-[#c6c6c6] bg-white">
        <svg width="9" height="5" viewBox="0 0 9 5"><path d="M0 0h9L4.500 5z" fill="#777" /></svg>
      </div>
    </div>
  </div>
);

// ---------- sheet tabs ----------
const sheetTabs: [string, string][] = [
  ["Income Statement", "w-[136.6px]"],
  ["Balance Sheet", "w-[109px]"],
  ["Cash Flow Statement", "w-[153px]"],
  ["Ratio Analysis", "w-[110.5px]"],
  ["Financials", "w-[86px]"],
  ["Profitability", "w-[97.5px]"],
  ["Cash Flow Ratios", "w-[127.5px]"],
  ["Liquidity", "w-[79px]"],
];

const TabBar = () => (
  <div className={`flex h-[29px] border-b border-[#c6c6c6] bg-[#e6e6e6] text-[12px] text-[#444] ${uiFont}`}>
    <div className="flex h-full w-[100px] items-center">
      <svg width="4" height="7" viewBox="0 0 4 7" className="ml-[27px]"><path d="M4 0v7L0 3.500z" fill="#c0c0c0" /></svg>
      <svg width="4" height="7" viewBox="0 0 4 7" className="ml-[26px]"><path d="M0 0v7l4-3.500z" fill="#217346" /></svg>
    </div>
    {sheetTabs.map(([t, w]) => (
      <div key={t} className={`mt-[2px] flex h-[24px] shrink-0 items-center justify-center border-l border-[#ababab] pr-[2px] ${w}`}>
        {t}
      </div>
    ))}
    <div className="flex h-[26px] w-[84px] shrink-0 items-center justify-center border-x border-[#ababab] border-b-2 border-b-[#217346] bg-white pt-[2px] font-bold text-[#217346]">
      Efficiency
    </div>
    <div className="ml-[7px] flex h-full w-[16px] items-center justify-center pb-[2px] font-bold text-[#217346]">...</div>
    <Slot w="w-[18px]" className="ml-[9px]">
      <svg width="17" height="17" viewBox="0 0 17 17" fill="none" stroke="#777">
        <circle cx="8.500" cy="8.500" r="7.500" strokeWidth="1.300" />
        <path d="M8.500 4v9M4 8.500h9" strokeWidth="1.600" />
      </svg>
    </Slot>
    <Slot w="w-[4px]" className="ml-[10px]">
      <svg width="3" height="12" viewBox="0 0 3 12"><path d="M1.500 0v2M1.500 5v2M1.500 10v2" stroke="#a6a6a6" strokeWidth="2" /></svg>
    </Slot>
    <div className="ml-[22px] mt-[7px] flex h-[15px] w-[730px] items-center">
      <div className="flex h-full w-[15px] items-center justify-center border-2 border-[#b0b0b0] bg-white">
        <svg width="4" height="7" viewBox="0 0 4 7"><path d="M4 0v7L0 3.500z" fill="#666" /></svg>
      </div>
      <div className="h-full w-[674px] border-y-2 border-r-2 border-[#b0b0b0] bg-white" />
      <div className="h-full w-[27px] bg-[#dcdcdc]" />
      <div className="flex h-full w-[14px] items-center justify-center border-2 border-[#c6c6c6] bg-white">
        <svg width="4" height="7" viewBox="0 0 4 7"><path d="M0 0v7l4-3.500z" fill="#666" /></svg>
      </div>
    </div>
  </div>
);

const StatusBar = () => (
  <div className={`flex h-[21px] items-center bg-[#f0f0f0] text-[11px] text-[#444] ${uiFont}`}>
    <span className="ml-[7px]">Ready</span>
    <div className="ml-auto flex h-full items-center">
      <Slot w="w-[38px]" className="bg-[#c6c6c6]">
        <svg width="14" height="14" viewBox="0 0 14 14" fill="none" stroke="#666">
          <path d="M.5.5h13v13H.5zM5 .5v13M9.500.5v13M.5 5h13M.5 9.500h13" />
        </svg>
      </Slot>
      <Slot w="w-[38px]">
        <svg width="14" height="14" viewBox="0 0 14 14" fill="none" stroke="#666">
          <path d="M.5.5h13v13H.5zM3.500 3.500h7v7h-7zM5 6h4M5 8h4" />
        </svg>
      </Slot>
      <Slot w="w-[38px]">
        <svg width="14" height="14" viewBox="0 0 14 14" fill="none" stroke="#666">
          <path d="M.5.5h13v13H.5zM6 .5v7h7.500" />
        </svg>
      </Slot>
      <div className="ml-[6px] flex w-[124px] items-center">
        <div className="h-[2px] w-[7px] bg-[#666]" />
        <div className="relative ml-[4px] h-px w-[100px] bg-[#9a9a9a]">
          <div className="absolute left-[30px] top-[-6px] h-[13px] w-[4px] bg-[#666]" />
          <div className="absolute left-[50px] top-[-3px] h-[7px] w-px bg-[#9a9a9a]" />
        </div>
        <svg width="8" height="8" viewBox="0 0 8 8" className="ml-[4px]"><path d="M4 0v8M0 4h8" stroke="#666" strokeWidth="2" /></svg>
      </div>
      <span className="ml-[10px] w-[38px] text-[#666]">70%</span>
    </div>
  </div>
);

// ---------- taskbar icons ----------
const ChromeIcon = ({ badge, badgeColor }: { badge?: string; badgeColor?: string }) => (
  <div className="relative h-[24px] w-[24px]">
    <svg width="24" height="24" viewBox="0 0 24 24">
      <circle cx="12" cy="12" r="11" fill="#4caf50" />
      <path d="M12 1a11 11 0 0 1 9.500 5.500H12a5.500 5.500 0 0 0-5 3L3 5a11 11 0 0 1 9-4z" fill="#db4437" />
      <path d="M21.500 6.500A11 11 0 0 1 12 23l5-8.500a5.500 5.500 0 0 0 0-8z" fill="#fbc02d" />
      <circle cx="12" cy="12" r="5.300" fill="#fff" />
      <circle cx="12" cy="12" r="4" fill="#4285f4" />
    </svg>
    {badge && (
      <div className={`absolute bottom-[-3px] right-[-3px] flex h-[14px] w-[14px] items-center justify-center rounded-full text-[8px] font-bold leading-none text-white ${badgeColor}`}>
        {badge}
      </div>
    )}
  </div>
);

const TaskbarApps = () => (
  <>
    <Slot w="w-[49px]">
      <div className="h-[15px] w-[15px] rounded-full border-[3px] border-white" />
    </Slot>
    <Slot w="w-[49px]">
      <svg width="16" height="20" viewBox="0 0 16 20" fill="none" stroke="#fff" strokeWidth="1.200">
        <path d="M0 1h14M0 19h14M1 6h9v8H1zM13 6v2M13 12v2" />
      </svg>
    </Slot>
    <Slot w="w-[49px]" className="border-b-[3px] border-b-[#76b9ed]"><ChromeIcon badge="A" badgeColor="bg-[#c0392b]" /></Slot>
    <Slot w="w-[49px]" className="border-b-[3px] border-b-[#76b9ed]">
      <svg width="24" height="24" viewBox="0 0 24 24">
        <path d="M2 3h8l2 2h10v17H2z" fill="#f5c542" />
        <path d="M2 7h20v15H2z" fill="#fad25a" />
        <path d="M8 16h8v6h-2v-3h-4v3H8z" fill="#2b88d8" />
      </svg>
    </Slot>
    <Slot w="w-[49px]">
      <svg width="24" height="24" viewBox="0 0 24 24">
        <path d="M1 9l11-8 11 8v14H1z" fill="#0f6cbd" />
        <path d="M1 10l11 8 11-8v13H1z" fill="#28a8ea" />
        <path d="M4 7h16v3l-8 6-8-6z" fill="#fff" />
      </svg>
    </Slot>
    <Slot w="w-[49px]">
      <svg width="24" height="24" viewBox="0 0 24 24">
        <path d="M12 1a11 11 0 0 0-9.500 16.500L1 23l5.700-1.500A11 11 0 1 0 12 1z" fill="#25d366" />
        <path d="M8 6.500c-1.500 1-2 3 0 6s5 5 7.500 5c2 0 3-2 2.500-3l-2.500-1.500-1.500 1.500c-1 0-3.500-2.500-3.500-3.500L11.500 9 10 6.500z" fill="#fff" />
      </svg>
    </Slot>
    <Slot w="w-[49px]">
      <svg width="26" height="24" viewBox="0 0 26 24" fill="none">
        <ellipse cx="12" cy="10" rx="11" ry="8" fill="#e8e8e8" stroke="#c0392b" strokeWidth="1.500" />
        <path d="M10 3l7 13M18 3l-7 13" stroke="#aaa" strokeWidth="1.500" />
        <circle cx="12" cy="20" r="2.500" stroke="#1f8ecd" strokeWidth="1.800" />
        <circle cx="20" cy="19" r="2.500" stroke="#1f8ecd" strokeWidth="1.800" />
      </svg>
    </Slot>
    <Slot w="w-[49px]"><ChromeIcon badge="D" badgeColor="bg-[#e8521a]" /></Slot>
    <Slot w="w-[49px]"><ChromeIcon badge="D" badgeColor="bg-[#e8801a]" /></Slot>
    <Slot w="w-[49px]">
      <svg width="24" height="24" viewBox="0 0 24 24">
        <rect x="1" y="1" width="22" height="22" rx="9" fill="#0f8a66" />
        <rect x="6" y="6" width="5.500" height="5.500" fill="#fff" />
        <rect x="13" y="6" width="5.500" height="5.500" fill="#bfe6d8" />
        <rect x="6" y="13" width="5.500" height="5.500" fill="#bfe6d8" />
        <rect x="13" y="13" width="5.500" height="5.500" fill="#fff" />
      </svg>
    </Slot>
    <Slot w="w-[49px]">
      <svg width="24" height="24" viewBox="0 0 24 24" fill="none">
        <path d="M3 3l18-1v16l-18 1z" fill="#e2e2e2" stroke="#999" />
        <path d="M5 13l4-4 2 3 3-6 2 5 3 1" stroke="#3c8dd0" />
        <path d="M8 20h10l1 2H7z" fill="#bbb" />
      </svg>
    </Slot>
    <Slot w="w-[49px]">
      <div className="relative h-[24px] w-[24px]">
        <ChromeIcon />
        <div className="absolute bottom-[-3px] right-[-2px] h-[13px] w-[11px] rounded-[3px] bg-[#8d6e63]" />
      </div>
    </Slot>
    <Slot w="w-[49px]">
      <svg width="24" height="24" viewBox="0 0 24 24" fill="none">
        <circle cx="12" cy="12" r="11.500" fill="#1ed760" />
        <path d="M5.500 8.500c4-1.200 9-1 13 1.200M6.500 12.300c3.500-1 7.500-.6 10.800 1.200M7.300 15.800c3-.8 6-.4 8.700 1" stroke="#121212" strokeWidth="2" strokeLinecap="round" />
      </svg>
    </Slot>
    <Slot w="w-[49px]">
      <svg width="24" height="24" viewBox="0 0 24 24">
        <rect x="0" y="0" width="24" height="24" rx="6" fill="#2d8cff" />
        <rect x="4" y="7.500" width="11" height="9.500" rx="2" fill="#fff" />
        <path d="M16 11l4-3v8.500l-4-3z" fill="#fff" />
      </svg>
    </Slot>
    <Slot w="w-[48px]" className="border-b-[3px] border-b-[#76b9ed] bg-[#484848]">
      <svg width="24" height="22" viewBox="0 0 24 22">
        <rect x="10" y="2" width="13" height="18" fill="#fff" />
        <path d="M10 6.500h13M10 11h13M10 15.500h13M16 2v18" stroke="#217346" />
        <path d="M0 2l13-2v22L0 20z" fill="#185c37" />
        <text x="2.500" y="15" fontSize="11" fontWeight="700" fontFamily="Liberation Sans" fill="#fff">X</text>
      </svg>
    </Slot>
  </>
);

const Tray = () => (
  <div className={`ml-auto flex h-full text-white ${uiFont}`}>
    <Slot w="w-[28px]">
      <svg width="24" height="24" viewBox="0 0 24 24">
        <circle cx="12" cy="11" r="10" fill="#f5b82e" />
        <path d="M1 16h22M3 13h18M6 19h12" stroke="#d8d0c0" strokeWidth="2.400" />
      </svg>
    </Slot>
    <div className="ml-[6px] flex w-[88px] items-center gap-[9px] whitespace-nowrap pt-[1px] text-[13.5px]">
      <span>31°C</span>
      <span>Smoke</span>
    </div>
    <Slot w="w-[24px]" className="ml-[3px]">
      <svg width="13" height="8" viewBox="0 0 13 8" fill="none"><path d="M1 7l5.500-6L12 7" stroke="#fff" strokeWidth="1.300" /></svg>
    </Slot>
    <Slot w="w-[23px]">
      <svg width="18" height="16" viewBox="0 0 18 16" fill="none">
        <path d="M1 5h3l4-4v13L4 10H1z" stroke="#fff" />
        <circle cx="12.500" cy="11.500" r="4.500" fill="#e81123" />
        <path d="M10.500 9.500l4 4M14.500 9.500l-4 4" stroke="#fff" />
      </svg>
    </Slot>
    <Slot w="w-[25px]">
      <svg width="14" height="18" viewBox="0 0 14 18" fill="none" stroke="#fff">
        <path d="M3 2a5 5 0 0 1 7 0M3 16a5 5 0 0 0 7 0M1 5.500h8v7H1zM9 9l4-3v6z" />
      </svg>
    </Slot>
    <Slot w="w-[20px]">
      <svg width="18" height="18" viewBox="0 0 18 18">
        <circle cx="4" cy="3" r="2.500" fill="#fff" />
        <circle cx="12" cy="3" r="2.500" fill="#fff" />
        <circle cx="14" cy="9" r="2" fill="#fff" />
        <rect x="1" y="8" width="9" height="10" fill="#d40f1c" />
        <text x="3.500" y="16" fontSize="8" fontWeight="700" fontFamily="Liberation Sans" fill="#fff">1</text>
      </svg>
    </Slot>
    <Slot w="w-[30px]">
      <svg width="20" height="16" viewBox="0 0 20 16" fill="none">
        <path d="M1 3h13v9H1z" stroke="#fff" />
        <rect x="3" y="5" width="6" height="5" fill="#fff" />
        <circle cx="14.500" cy="10.500" r="5" fill="#0b8a3e" />
        <path d="M14.500 7v7" stroke="#fff" />
      </svg>
    </Slot>
    <Slot w="w-[22px]">
      <svg width="16" height="14" viewBox="0 0 16 14" fill="none" stroke="#ddd" strokeWidth="1.200">
        <path d="M1 13a12 12 0 0 1 12-12M4 13a9 9 0 0 1 9-9M7 13a6 6 0 0 1 6-6M10 13a3 3 0 0 1 3-3" />
      </svg>
    </Slot>
    <Slot w="w-[30px]">
      <svg width="24" height="15" viewBox="0 0 24 15" fill="none" stroke="#fff">
        <rect x=".5" y=".5" width="23" height="14" />
        <path d="M3 4h18M3 7h18M3 10h18" strokeDasharray="1.500 1" />
      </svg>
    </Slot>
    <Slot w="w-[38px]" className="text-[11.5px]">ENG</Slot>
    <div className="flex w-[70px] flex-col items-center justify-center text-[11px] leading-[17px]">
      <span>18:36</span>
      <span>17-10-2021</span>
    </div>
    <Slot w="w-[40px]">
      <svg width="18" height="17" viewBox="0 0 18 17">
        <path d="M0 0h18v13h-6l-3 4-3-4H0z" fill="#fff" />
        <path d="M4 3.500h10M4 6.500h10M4 9.500h6" stroke="#222" />
      </svg>
    </Slot>
    <div className="w-[13px]" />
  </div>
);

const Taskbar = () => (
  <div className={`flex h-[40px] bg-[#1e1e1e] ${uiFont}`}>
    <Slot w="w-[48px]">
      <svg width="16" height="16" viewBox="0 0 16 16" fill="#fff">
        <path d="M0 2.200l6.800-1v6.400H0zM7.600 1.100L16 0v7.600H7.600zM0 8.400h6.800v6.400l-6.800-1zM7.600 8.400H16V16l-8.400-1.100z" />
      </svg>
    </Slot>
    <div className="flex h-full w-[344px] shrink-0 items-center bg-[#f0f0f0] pl-[12px] text-[14.5px] text-[#222]">
      <svg width="16" height="16" viewBox="0 0 16 16" fill="none" stroke="#222" strokeWidth="1.200">
        <circle cx="10" cy="6" r="5" />
        <path d="M6.500 9.500L1 15" />
      </svg>
      <span className="ml-[12px] pt-[1px]">Type here to search</span>
    </div>
    <TaskbarApps />
    <Tray />
  </div>
);

const App = () => (
  <div className={`relative h-[1080px] w-[1920px] overflow-hidden bg-[#e6e6e6] ${uiFont}`}>
    <div className="h-[59px] bg-[#217346]">
      <TitleBar />
      <MenuTabs />
    </div>
    <Ribbon />
    <FormulaBar />
    <ColumnHeader />
    <Sheet />
    <TabBar />
    <StatusBar />
    <Taskbar />
  </div>
);

export default App;
